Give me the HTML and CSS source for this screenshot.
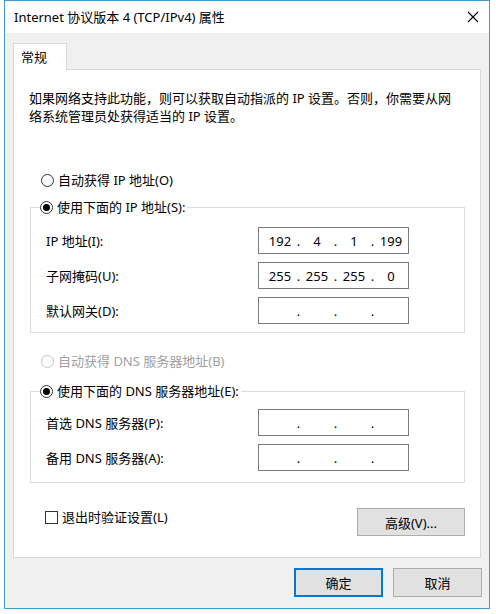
FILE: index.html
```html
<!DOCTYPE html>
<html>
<head>
    <title>Internet 协议版本 4 (TCP/IPv4) 属性</title>
    <link rel="stylesheet" href="styles.css">
</head>
<body>

<div class="window">
  <div class="titlebar">
    <span class="title">Internet 协议版本 4 (TCP/IPv4) 属性</span>
    <svg class="close" width="12" height="12" viewBox="0 0 12 12">
      <path d="M1 1 L11 11 M11 1 L1 11" stroke="#000" stroke-width="1.1" fill="none"/>
    </svg>
  </div>

  <div class="client">
    <div class="tabs">
      <div class="tab active">常规</div>
    </div>

    <div class="panel">
      <p class="intro">如果网络支持此功能，则可以获取自动指派的 IP 设置。否则，你需要从网<br>络系统管理员处获得适当的 IP 设置。</p>

      <div class="radio-row first">
        <span class="radio"></span>
        <span>自动获得 IP 地址(O)</span>
      </div>

      <fieldset class="group">
        <legend class="radio-row">
          <span class="radio checked"></span>
          <span>使用下面的 IP 地址(S):</span>
        </legend>
        <div class="fields">
          <label>IP 地址(I):</label>
          <div class="ipbox">
            <span class="seg">192</span><span class="dot">.</span><span class="seg">4</span><span class="dot">.</span><span class="seg">1</span><span class="dot">.</span><span class="seg">199</span>
          </div>
          <label>子网掩码(U):</label>
          <div class="ipbox">
            <span class="seg">255</span><span class="dot">.</span><span class="seg">255</span><span class="dot">.</span><span class="seg">255</span><span class="dot">.</span><span class="seg">0</span>
          </div>
          <label>默认网关(D):</label>
          <div class="ipbox">
            <span class="seg"></span><span class="dot">.</span><span class="seg"></span><span class="dot">.</span><span class="seg"></span><span class="dot">.</span><span class="seg"></span>
          </div>
        </div>
      </fieldset>

      <div class="radio-row second disabled">
        <span class="radio"></span>
        <span>自动获得 DNS 服务器地址(B)</span>
      </div>

      <fieldset class="group dns">
        <legend class="radio-row">
          <span class="radio checked"></span>
          <span>使用下面的 DNS 服务器地址(E):</span>
        </legend>
        <div class="fields">
          <label>首选 DNS 服务器(P):</label>
          <div class="ipbox">
            <span class="seg"></span><span class="dot">.</span><span class="seg"></span><span class="dot">.</span><span class="seg"></span><span class="dot">.</span><span class="seg"></span>
          </div>
          <label>备用 DNS 服务器(A):</label>
          <div class="ipbox">
            <span class="seg"></span><span class="dot">.</span><span class="seg"></span><span class="dot">.</span><span class="seg"></span><span class="dot">.</span><span class="seg"></span>
          </div>
        </div>
      </fieldset>

      <div class="bottom-row">
        <div class="check-row">
          <span class="checkbox"></span>
          <span>退出时验证设置(L)</span>
        </div>
        <button class="btn advanced">高级(V)...</button>
      </div>
    </div>

    <div class="footer">
      <button class="btn default">确定</button>
      <button class="btn">取消</button>
    </div>
  </div>
</div>

</body>
</html>
```

FILE: styles.css
```css
    * {
        box-sizing: border-box;
    }

    body {
        margin: 0;
        padding: 0;
        background-color: #fff;
        font-family: "Noto Sans", "Noto Sans CJK SC", sans-serif;
        font-size: 13px;
        line-height: 18px;
        color: #000;
    }

    .window {
        margin-left: 4px;
        width: 486px;
        height: 609px;
        border: 1px solid #3f9ad6;
        display: flex;
        flex-direction: column;
    }

    .titlebar {
        height: 32px;
        background-color: #fff;
        display: flex;
        align-items: center;
        justify-content: space-between;
        padding: 0 10px 0 9px;
    }

    .title {
        font-size: 13px;
    }

    .close {
        display: block;
    }

    .client {
        flex: 1;
        background-color: #f0f0f0;
        padding: 10px 7px 0 8px;
        display: flex;
        flex-direction: column;
    }

    .tabs {
        display: flex;
    }

    .tab {
        position: relative; /* sits over the panel's top border */
        z-index: 1;
        width: 54px;
        height: 27px;
        margin-bottom: -1px;
        padding: 4px 0 0 7px;
        background-color: #fff;
        border: 1px solid #d9d9d9;
        border-bottom: none;
    }

    .panel {
        width: 468px;
        height: 489px;
        background-color: #fff;
        border: 1px solid #d9d9d9;
        padding: 19px 14px 0 15px;
    }

    .intro {
        margin: 0;
        white-space: nowrap;
    }

    .radio-row {
        display: flex;
        align-items: center;
        height: 18px;
    }

    .radio-row.first {
        margin: 46px 0 0 12px;
    }

    .radio-row.second {
        margin: 19px 0 0 12px;
    }

    .disabled {
        color: #a0a0a0;
    }

    .radio {
        width: 13px;
        height: 13px;
        border: 1px solid #333;
        border-radius: 50%;
        margin-right: 4px;
        display: flex;
        align-items: center;
        justify-content: center;
        background-color: #fff;
    }

    .disabled .radio {
        border-color: #c6c6c6;
    }

    .radio.checked::after {
        content: "";
        width: 7px;
        height: 7px;
        border-radius: 50%;
        background-color: #000;
    }

    .group {
        margin: 9px 0 0 1px;
        width: 435px;
        border: 1px solid #dcdcdc;
        padding: 11px 0 8px 15px;
    }

    .group.dns {
        margin-top: 12px;
        padding-top: 9px;
        padding-bottom: 11px;
    }

    .group legend {
        margin-left: -6px;
        padding: 0 2px 0 0;
    }

    .fields {
        display: grid;
        grid-template-columns: 212px 151px;
        row-gap: 8px;
        align-items: center;
    }

    .ipbox {
        height: 27px;
        border: 1px solid #7a7a7a;
        display: flex;
        align-items: center;
        padding-left: 7px;
    }

    .seg {
        width: 28px;
        text-align: center;
    }

    .dot {
        width: 9px;
        text-align: center;
    }

    .bottom-row {
        margin: 25px 0 0 16px;
        display: flex;
        justify-content: space-between;
        align-items: flex-start;
    }

    .check-row {
        display: flex;
        align-items: center;
        height: 18px;
    }

    .checkbox {
        width: 13px;
        height: 13px;
        border: 1px solid #333;
        margin-right: 4px;
        background-color: #fff;
    }

    .btn {
        font-family: inherit;
        font-size: 13px;
        color: #000;
        background-color: #e1e1e1;
        border: 1px solid #adadad;
        padding: 0;
        width: 89px;
        height: 29px;
    }

    .btn.advanced {
        width: 108px;
        height: 28px;
        margin-right: 1px;
    }

    .btn.default {
        border-color: #0078d7;
        box-shadow: inset 0 0 0 1px #0078d7;
    }

    .footer {
        margin-top: 10px;
        display: flex;
        justify-content: flex-end;
        gap: 10px;
        padding-right: 0;
    }
```
